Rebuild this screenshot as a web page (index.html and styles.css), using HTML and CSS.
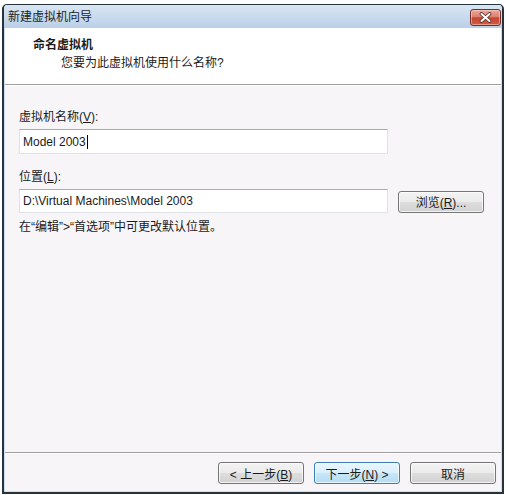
FILE: index.html
```html
<!DOCTYPE html>
<html lang="zh">
<head>
<meta charset="utf-8">
<title>新建虚拟机向导</title>
<link rel="stylesheet" href="styles.css">
</head>
<body>
<div class="window">
  <div class="titlebar">
    <span class="title">新建虚拟机向导</span>
    <button class="close" aria-label="关闭">
      <svg width="13" height="11" viewBox="0 0 13 11">
        <path d="M2.5 2 L10.5 9 M10.5 2 L2.5 9" stroke="#5a2a22" stroke-width="3.6" stroke-linecap="round"/>
        <path d="M2.5 2 L10.5 9 M10.5 2 L2.5 9" stroke="#ffffff" stroke-width="2" stroke-linecap="round"/>
      </svg>
    </button>
  </div>
  <div class="client">
    <div class="header">
      <div class="h-title">命名虚拟机</div>
      <div class="h-sub">您要为此虚拟机使用什么名称?</div>
    </div>
    <div class="content">
      <div class="label">虚拟机名称(<u>V</u>):</div>
      <div class="field field-name"><span class="caret">Model 2003</span></div>
      <div class="label label-gap">位置(<u>L</u>):</div>
      <div class="row">
        <div class="field field-loc">D:\Virtual Machines\Model 2003</div>
        <button class="btn browse">浏览(<u>R</u>)...</button>
      </div>
      <div class="hint">在“编辑”&gt;“首选项”中可更改默认位置。</div>
    </div>
    <div class="footer">
      <button class="btn">&lt; 上一步(<u>B</u>)</button>
      <button class="btn btn-default">下一步(<u>N</u>) &gt;</button>
      <button class="btn">取消</button>
    </div>
  </div>
</div>
</body>
</html>
```

FILE: styles.css
```css
html, body {
  margin: 0;
  padding: 0;
  background: #ffffff;
}

body {
  font-family: "Liberation Sans", "Noto Sans CJK SC", sans-serif;
  font-size: 12px;
  color: #1b1b1b;
}

.window {
  box-sizing: border-box;
  width: 502px;
  height: 490px;
  margin: 4px 0 0 2px;
  border: 2px solid #26323c;
  border-top-width: 1px;
  border-radius: 5px 5px 0 0;
  background: #cddff0;
  display: flex;
  flex-direction: column;
  overflow: hidden;
}

.titlebar {
  height: 23px;
  flex: none;
  display: flex;
  align-items: center;
  justify-content: space-between;
  padding: 1px 1px 0 4px;
  box-sizing: border-box;
  background: linear-gradient(#d9e6f3, #b9cfe8);
}

.title {
  font-size: 12px;
  line-height: 16px;
  color: #1e1e1e;
}

.close {
  width: 31px;
  height: 17px;
  padding: 0;
  border: 1px solid #70302a;
  border-radius: 3px;
  background: linear-gradient(#eba99c 0%, #dc8071 45%, #c6452f 52%, #d05c44 100%);
  display: flex;
  align-items: center;
  justify-content: center;
  box-shadow: inset 0 0 0 1px rgba(255, 220, 210, 0.5);
}

.client {
  flex: 1;
  display: flex;
  flex-direction: column;
  margin: 0 1px 1px 1px;
  background: #f7f5f7;
}

.header {
  height: 57px;
  flex: none;
  box-sizing: border-box;
  background: #ffffff;
  border-bottom: 1px solid #a0a0a0;
  padding: 7px 0 0 28px;
}

.h-title {
  font-weight: bold;
  line-height: 18px;
  font-family: "Noto Sans CJK SC", sans-serif;
}

.h-sub {
  line-height: 18px;
  margin: 1px 0 0 28px;
}

.content {
  flex: 1;
  border-top: 1px solid #ffffff;
  padding: 23px 0 0 14px;
}

.label {
  line-height: 16px;
}

.label-gap {
  margin-top: 15px;
}

.field {
  box-sizing: border-box;
  width: 369px;
  margin-top: 4px;
  background: #ffffff;
  border: 1px solid #dfe3e8;
  border-top-color: #a9abb0;
  padding-left: 3px;
  display: flex;
  align-items: center;
}

.field-name {
  height: 25px;
}

.field-loc {
  height: 24px;
}

.caret {
  border-right: 1px solid #000000;
  padding-right: 1px;
  line-height: 14px;
}

.row {
  display: flex;
  align-items: center;
}

.browse {
  margin: 5px 0 0 10px;
  height: 23px;
}

.hint {
  margin-top: 6px;
  line-height: 16px;
}

.footer {
  height: 39px;
  flex: none;
  box-sizing: border-box;
  border-top: 1px solid #a0a0a0;
  box-shadow: inset 0 1px 0 #ffffff;
  display: flex;
  justify-content: flex-end;
  align-items: flex-start;
  gap: 10px;
  padding: 9px 5px 0 0;
}

.btn {
  width: 86px;
  height: 22px;
  padding: 0;
  font-family: "Liberation Sans", "Noto Sans CJK SC", sans-serif;
  font-size: 12px;
  color: #1b1b1b;
  border: 1px solid #767676;
  border-radius: 3px;
  background: linear-gradient(#f3f3f3 0%, #ebebeb 48%, #dddddd 52%, #d2d2d2 100%);
  box-shadow: inset 0 0 0 1px rgba(255, 255, 255, 0.7);
}

.btn-default {
  border-color: #3c7fb1;
  background: linear-gradient(#eaf6fd 0%, #d9f0fc 48%, #c6e7f9 52%, #b4dcf3 100%);
}
```
